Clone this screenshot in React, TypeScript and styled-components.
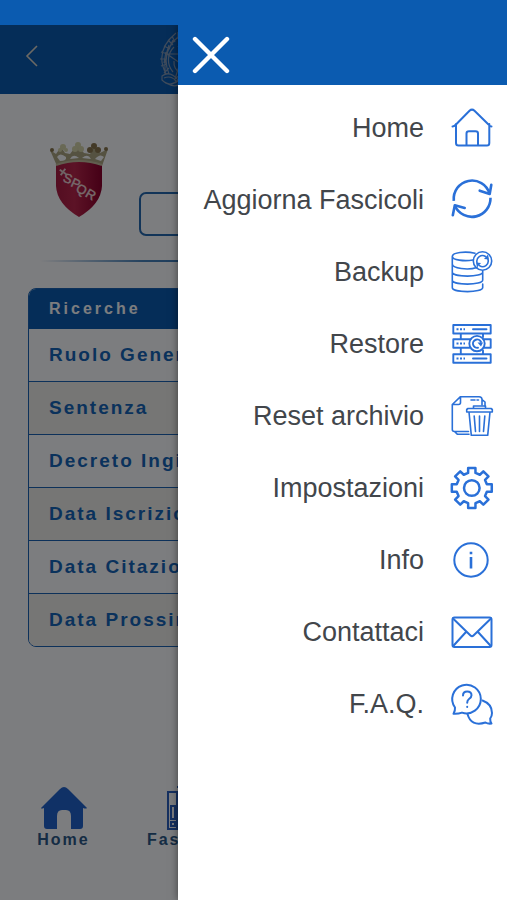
import React from "react";
import styled, { createGlobalStyle } from "styled-components";

const GlobalStyle = createGlobalStyle`
  *, *::before, *::after { box-sizing: border-box; }
  body {
    margin: 0;
    font-family: "Liberation Sans", Arial, Helvetica, sans-serif;
    background: #f9fafe;
  }
`;

const brand = "#0b5bb0";
const line = "#2a70d8";

const Shell = styled.div`
  display: flex;
  flex-direction: column;
  min-height: 100vh;
  overflow: hidden;
`;

const StatusBar = styled.div`
  height: 25px;
  background: ${brand};
  z-index: 3;
`;

const Stage = styled.div`
  flex: 1;
  display: grid;
  grid-template: minmax(0, 1fr) / minmax(0, 1fr);
  & > * { grid-area: 1 / 1; }
`;

const Screen = styled.div`
  display: flex;
  flex-direction: column;
  background: #f9fafe;
`;

const Scrim = styled.div`
  background: rgba(0, 0, 0, 0.5);
  z-index: 1;
`;

const TopBar = styled.header`
  display: flex;
  align-items: center;
  gap: 108px;
  height: 69px;
  padding: 0 16px;
  background: ${brand};
`;

const IconButton = styled.button`
  display: flex;
  align-items: center;
  justify-content: center;
  padding: 0;
  border: 0;
  background: none;
  cursor: pointer;
`;

const BackButton = styled(IconButton)`
  width: 40px;
  height: 40px;
  margin: -8px 0 0 -4px;
`;

const Profile = styled.section`
  display: flex;
  gap: 28px;
  padding: 48px 28px 0 48px;
`;

const ArchiveButton = styled.button`
  flex: 1;
  height: 44px;
  margin-top: 50px;
  border: 2px solid #2468b0;
  border-radius: 7px;
  background: none;
`;

const Divider = styled.hr`
  width: calc(100% - 80px);
  height: 2px;
  margin: 24px auto 26px;
  border: 0;
  background: linear-gradient(90deg, transparent, #4a84bd 24%, #2468b0 50%, #4a84bd 76%, transparent);
`;

const Panel = styled.section`
  margin: 0 28px;
  border: 1px solid #1a62b4;
  border-radius: 8px;
  overflow: hidden;
`;

const PanelTitle = styled.h2`
  margin: 0;
  padding: 0 20px;
  font-size: 16px;
  line-height: 40px;
  letter-spacing: 3px;
  color: #f9fafe;
  background: ${brand};
`;

const SearchList = styled.ul`
  margin: 0;
  padding: 0;
  list-style: none;
`;

const SearchItem = styled.li`
  & + & { border-top: 1px solid #1a62b4; }
  &:nth-child(even) { background: #ececea; }
`;

const SearchButton = styled.button`
  width: 100%;
  height: 52px;
  padding: 0 20px;
  border: 0;
  background: none;
  text-align: left;
  white-space: nowrap;
  font: bold 19px "Liberation Sans", Arial, sans-serif;
  letter-spacing: 2px;
  color: #1564b8;
`;

const TabBar = styled.nav`
  display: grid;
  grid-template-columns: repeat(4, minmax(0, 1fr));
  margin-top: auto;
  padding-bottom: 50px;
`;

const Tab = styled.a`
  display: flex;
  flex-direction: column;
  align-items: center;
  font-size: 16px;
  font-weight: bold;
  line-height: 20px;
  letter-spacing: 2px;
  text-decoration: none;
  color: #2a5888;
`;

const Drawer = styled.aside`
  justify-self: end;
  width: calc(65% - 1px);
  z-index: 2;
  background: #fff;
  box-shadow: 0 0 8px rgba(0, 0, 0, 0.5);
`;

const DrawerHeader = styled.div`
  display: flex;
  align-items: center;
  height: 60px;
  padding-left: 14px;
  background: ${brand};
`;

const Menu = styled.nav`
  display: flex;
  flex-direction: column;
  padding: 7px 14px;
`;

const MenuLink = styled.a`
  display: flex;
  align-items: center;
  justify-content: flex-end;
  gap: 27px;
  height: 72px;
  font-size: 27px;
  white-space: nowrap;
  text-decoration: none;
  color: #42464b;
`;

const Glyph = styled.svg<{ $weight?: number }>`
  flex: none;
  width: 42px;
  height: 42px;
  overflow: visible;
  fill: none;
  stroke: ${line};
  stroke-width: ${(p) => p.$weight ?? 2};
  stroke-linecap: round;
  stroke-linejoin: round;
`;

const gearPath = (() => {
  const pts: string[] = [];
  for (let i = 0; i < 8; i++) {
    const base = (i * Math.PI) / 4;
    const steps: [number, number][] = [
      [-0.24, 15.5],
      [-0.18, 20.3],
      [0.18, 20.3],
      [0.24, 15.5],
    ];
    steps.forEach(([a, r]) => {
      pts.push(
        `${(20.8 + r * Math.sin(base + a)).toFixed(2)} ${(21 - r * Math.cos(base + a)).toFixed(2)}`
      );
    });
  }
  return `M${pts.join("L")}Z`;
})();

const HomeIcon = () => (
  <Glyph viewBox="0 0 42 42">
    <path d="M5 17V36Q5 38.500 7.500 38.500H36Q38.300 38.500 38.300 36V17M1.500 19.500Q3 19.500 5 17.500L18.500 3.800Q21 1.500 23.500 3.800L37.500 17.500Q39 19.500 40.500 19.500" />
    <path d="M15.500 38V26.500Q15.500 24.300 18 24.300H24.500Q27 24.300 27 26.500V38" />
  </Glyph>
);
const RefreshIcon = () => (
  <Glyph viewBox="0 0 42 42" $weight={2.6}>
    <path strokeLinecap="butt" d="M2.800 21.800A18.300 18.300 0 0 1 38.500 14.500M39.500 18.800A18.600 18.600 0 0 1 4 27" />
    <path d="M40.300 5.700L38.700 15L28.700 11.700M1.800 36.200L3.800 26.300L13.700 29" />
  </Glyph>
);
const BackupIcon = () => (
  <Glyph viewBox="0 0 42 42" $weight={1.6}>
    <path d="M24 2.200C14 0 1.300 1.500 1.300 5.500V36.500C1.300 42 31.700 42 31.700 36.500V33M31.700 20V29M1.300 5.500C1.300 9 13 10.500 22 9M1.300 13C1.300 17.500 17 19.500 26 16.500M1.300 21C1.300 26.500 31.700 26.500 31.700 21M1.300 29C1.300 34.500 31.700 34.500 31.700 29" />
    <circle cx="31.500" cy="10" r="9.200" />
    <path d="M26 11.500A5.600 5.600 0 0 1 34.500 5.500M37 8.500A5.600 5.600 0 0 1 28.500 14.700" />
    <path fill={line} stroke="none" d="M33 8L38 8.500L37 3.500ZM30 12L25 11.500L26 16.500Z" />
  </Glyph>
);
const RestoreIcon = () => (
  <Glyph viewBox="0 0 42 42" $weight={1.9}>
    <path d="M2.300 2H39.700V10.500H2.300ZM2.300 31.200H39.700V39.700H2.300ZM18.500 24.800H2.300V16.300H19.500M32.500 16.300H39.700V24.800H33M9.800 10.500V16.300M9.800 24.800V31.200M32 10.500V14M32 27.500V31.200M22 6.200H35.500M22 35.500H35.500" />
    <path strokeDasharray="2 1.500" strokeLinecap="butt" d="M5.500 6.200H14M5.500 20.500H14M5.500 35.500H14" />
    <circle cx="26" cy="20.600" r="7.700" />
    <path d="M27 24.800A4.200 4.200 0 1 1 30 19" />
    <path fill={line} stroke="none" d="M26.500 19.500H32L30 23.500Z" />
  </Glyph>
);
const ResetIcon = () => (
  <Glyph viewBox="0 0 42 42" $weight={1.6}>
    <path d="M17.500 36.500H3.500Q1.300 36.500 1.300 34.500V9.500L9.500 1.700H28Q31 1.700 31 4.500V10M1.300 9.500H7.500Q9.500 9.500 9.500 7.500V1.700M3.500 36.500L6.500 39.300H18M31 4.500L34 7V11M20 5H24M26 5H27.500" />
    <path d="M15.700 17V14.500L17 13.500H40L41.300 14.500V17ZM22.500 13.500V11H34.500V13.500M18 17L20.300 40.300H36.700L39 17M23.200 21L24.500 36.500M28.500 21V36.500M33.800 21L32.500 36.500" />
  </Glyph>
);
const GearIcon = () => (
  <Glyph viewBox="0 0 42 42" $weight={2.5}>
    <path d={gearPath} />
    <circle cx="20.800" cy="21" r="7.800" />
  </Glyph>
);
const InfoIcon = () => (
  <Glyph viewBox="0 0 42 42">
    <circle cx="20" cy="21" r="16.700" />
    <path strokeWidth="2.600" strokeLinecap="butt" d="M20 18V29.500M20 12.700V15.300" />
  </Glyph>
);
const MailIcon = () => (
  <Glyph viewBox="0 0 42 42">
    <rect x="1.500" y="6.500" width="39" height="29.500" rx="2" />
    <path d="M2 7.500L19.500 24.500Q21 26 22.500 24.500L40 7.500M2.200 35L15 21M39.800 35L27 21" />
  </Glyph>
);
const FaqIcon = () => (
  <Glyph viewBox="0 0 42 42">
    <path d="M4 24.500A14.300 14.300 0 1 1 11 29.600Q7 31 2.500 30.700Q4.300 28 4 24.500Z" />
    <path d="M31.500 17.500Q41 21 41 30Q41 33 39.200 35.500Q39 38.500 40.500 40.500Q37 41 34.500 39.500Q20 44 16.500 31" />
    <path d="M12 12.500Q12 8.500 16.200 8.500Q20.500 8.500 20.500 12.300Q20.500 14.500 18 16Q16.200 17.200 16.200 19.800M16.200 23.700V24" />
  </Glyph>
);

const Chevron = () => (
  <svg width="14" height="22" viewBox="0 0 14 22" fill="none" stroke="#d8d2c8" strokeWidth="1.600">
    <path d="M12 1L2 11L12 21" />
  </svg>
);

const Cross = () => (
  <svg width="38" height="38" viewBox="0 0 38 38" stroke="#fff" strokeWidth="4.400" strokeLinecap="round">
    <path d="M3 3L35 35M35 3L3 35" />
  </svg>
);

const Emblem = () => (
  <svg width="54" height="60" viewBox="0 0 54 60" fill="none" stroke="#7f96b6" strokeWidth="1.200">
    <path d="M16 3Q-6 21 6 44M19 6Q0 22 9 44M12 6L15 12M8 10L13 15M4 16L10 19M1 22L8 24M0 29L7 29M1 36L7 34M4 43L9 38M18 2L18 9M13 10L9 19M9 15L6 25M6 22L4 33M5 29L5 41M2 46Q10 40 18 50Q10 58 2 50ZM4 48Q11 45 16 51M8 54Q16 58 22 53" />
    <path d="M27 9L31 24H47L34 33L39 49L27 39L15 49L20 33L7 24H23ZM14 17A18 18 0 0 0 13 42M18 16L23 24M14 31A13 13 0 0 0 20 43M27 53V58M15 53L26 46M20 12A20 20 0 0 1 38 13" />
    <path d="M38 3Q60 21 48 44M35 6Q54 22 45 44M52 46Q44 40 36 50Q44 58 52 50Z" />
  </svg>
);

const Crest = () => (
  <svg width="63" height="76" viewBox="0 0 63 76" role="img" aria-label="SPQR">
    <defs>
      <linearGradient id="shield" x1="0" x2="1">
        <stop offset="0" stopColor="#a81b43" />
        <stop offset="0.4" stopColor="#b9264d" />
        <stop offset="1" stopColor="#8a002d" />
      </linearGradient>
    </defs>
    <path d="M2 8L8 12L13 5L17 11L22 12L29 3L36 11L42 12L47 4L52 11L60 7L54 24Q31 16 9 24Z" fill="#aaa482" />
    <path d="M9 15Q12 10 18 15Q19 19 12 19ZM22 17Q25 11 31 16ZM34 16Q40 11 43 17ZM47 17Q52 11 56 15L53 19Z" fill="#f9fafe" />
    <g fill="#d3d2aa">
      <circle cx="15" cy="5" r="3" /><circle cx="12" cy="8" r="2" /><circle cx="18" cy="8" r="2" />
      <circle cx="30" cy="3" r="3" /><circle cx="27" cy="7" r="3" /><circle cx="33" cy="7" r="3" />
    </g>
    <g fill="#87754f">
      <circle cx="46" cy="4" r="3" /><circle cx="42" cy="8" r="3" /><circle cx="50" cy="8" r="3" />
      <circle cx="4" cy="8" r="2" /><circle cx="58" cy="7" r="2" />
    </g>
    <path d="M8 23Q31 15 54 23V44Q53 62 31 75Q9 62 8 44Z" fill="url(#shield)" />
    <path d="M8 23Q31 15 54 23" fill="none" stroke="#c2bd9e" strokeWidth="2" />
    <path d="M15 26V34M11 30H19" stroke="#ddc5c8" strokeWidth="2" transform="rotate(35 15 30)" />
    <g fontSize="13" fill="#ecd6d9" stroke="#ecd6d9" strokeWidth="0.400" textAnchor="middle">
      <text x="20" y="41" transform="rotate(20 20 36)">S</text>
      <text x="28" y="46" transform="rotate(25 28 41)">P</text>
      <text x="34" y="52" transform="rotate(30 34 47)">Q</text>
      <text x="43" y="57" transform="rotate(30 43 52)">R</text>
    </g>
  </svg>
);

const HouseSolid = () => (
  <svg width="48" height="44" viewBox="0 0 48 44" fill="#2063cc">
    <path d="M2 22L21 3Q25 -1 29 3L48 22Q47 23 44 22V40Q44 43 41 43H32V30Q32 24 27 24H23Q18 24 18 30V43H8Q5 43 5 40V22Q2 23 2 22Z" />
  </svg>
);

const Binders = () => (
  <svg width="48" height="44" viewBox="0 0 48 44" fill="none" stroke="#2a60c0" strokeWidth="2">
    <path d="M2 6H11V43H2ZM5 20H9V33H5ZM5 36H9V40H5ZM11 1H22V43H11M26 4L37 1L47 40L37 43Z" />
  </svg>
);

const searches = [
  "Ruolo Generale",
  "Sentenza",
  "Decreto Ingiuntivo",
  "Data Iscrizione",
  "Data Citazione",
  "Data Prossima Udienza",
];

const menu: [string, React.FC][] = [
  ["Home", HomeIcon],
  ["Aggiorna Fascicoli", RefreshIcon],
  ["Backup", BackupIcon],
  ["Restore", RestoreIcon],
  ["Reset archivio", ResetIcon],
  ["Impostazioni", GearIcon],
  ["Info", InfoIcon],
  ["Contattaci", MailIcon],
  ["F.A.Q.", FaqIcon],
];

export default function App() {
  return (
    <>
      <GlobalStyle />
      <Shell>
        <StatusBar />
        <Stage>
          <Screen>
            <TopBar>
              <BackButton aria-label="Indietro">
                <Chevron />
              </BackButton>
              <Emblem />
            </TopBar>
            <Profile>
              <Crest />
              <ArchiveButton aria-label="Archivio" />
            </Profile>
            <Divider />
            <Panel>
              <PanelTitle>Ricerche</PanelTitle>
              <SearchList>
                {searches.map((label) => (
                  <SearchItem key={label}>
                    <SearchButton>{label}</SearchButton>
                  </SearchItem>
                ))}
              </SearchList>
            </Panel>
            <TabBar>
              <Tab href="#home">
                <HouseSolid />
                Home
              </Tab>
              <Tab href="#fascicoli">
                <Binders />
                Fascicoli
              </Tab>
            </TabBar>
          </Screen>
          <Scrim />
          <Drawer>
            <DrawerHeader>
              <IconButton aria-label="Chiudi">
                <Cross />
              </IconButton>
            </DrawerHeader>
            <Menu>
              {menu.map(([label, Icon]) => (
                <MenuLink key={label} href="#">
                  {label}
                  <Icon />
                </MenuLink>
              ))}
            </Menu>
          </Drawer>
        </Stage>
      </Shell>
    </>
  );
}
